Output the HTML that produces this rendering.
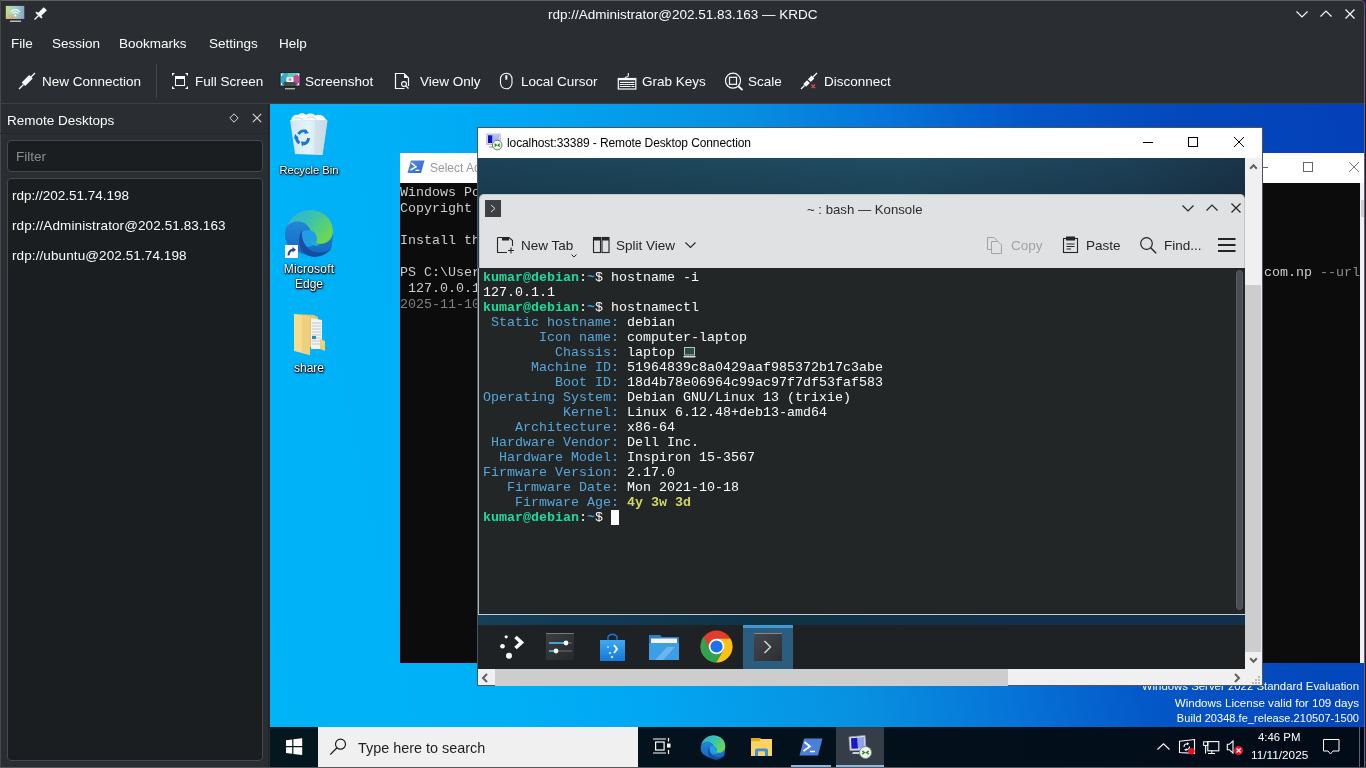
<!DOCTYPE html>
<html><head><meta charset="utf-8">
<style>
*{margin:0;padding:0;box-sizing:border-box}
html,body{will-change:transform;width:1366px;height:768px;overflow:hidden;background:#2a2e32;font-family:"Liberation Sans",sans-serif;position:relative}
.a{position:absolute}
.t{position:absolute;white-space:nowrap;line-height:1}
svg{position:absolute;overflow:visible}
.w{color:#fcfcfc;font-size:13.5px}
#desk{left:270px;top:104px;width:1094px;height:663px;overflow:hidden;
 background:linear-gradient(78deg,#00b4f8 0%,#00b0f7 20%,#02a6f2 32%,#0890e0 49%,#0674d8 61%,#0458c8 72%,#0448bc 85%,#0440b8 100%)}
#term pre{position:absolute;left:4px;top:1.5px;font-family:"Liberation Mono",monospace;font-size:13.33px;line-height:15px;color:#fcfcfc}
.g{color:#1cdc9a;font-weight:bold}
.bl{color:#55a6da}
.tl{color:#3aa0e0;font-weight:bold}
.y{color:#d2d862;font-weight:bold}
.ps{font-family:"Liberation Mono",monospace;font-size:13.33px;color:#cccccc;line-height:16px}
.di{color:#fff;font-size:11px;text-shadow:0 1px 1px rgba(0,0,0,.9),0 0 2px rgba(0,0,0,.9),1px 1px 2px #000;text-align:center}
</style></head><body>
<!-- KRDC frame -->
<div class="a" style="left:0;top:0;width:1366px;height:1px;background:#5c6064"></div>
<div class="a" style="left:0;top:0;width:1px;height:768px;background:#45494d"></div>
<div class="a" style="left:1364px;top:0;width:1px;height:768px;background:#6a5f7a"></div>
<div class="a" style="left:1365px;top:0;width:1px;height:768px;background:#2a1838"></div>
<div class="a" style="left:0;top:767px;width:1366px;height:1px;background:#55595d"></div>
<div class="a" style="left:1356px;top:0;width:10px;height:10px;background:#351a52"></div>
<div class="a" style="left:1350px;top:0;width:15px;height:14px;background:#2a2e32;border-top:1px solid #5c6064;border-right:1px solid #5d5670;border-top-right-radius:5px"></div>

<!-- title bar -->
<svg style="left:5px;top:5px" width="21" height="19" viewBox="0 0 21 19">
 <defs>
  <linearGradient id="kg" x1="0" y1="0" x2="1" y2="0"><stop offset="0" stop-color="#c4dc8a"/><stop offset=".45" stop-color="#9cd4c8"/><stop offset="1" stop-color="#8ca4c4"/></linearGradient>
  <radialGradient id="kg2" cx="0.3" cy="1" r="0.5"><stop offset="0" stop-color="#e89a70" stop-opacity=".8"/><stop offset="1" stop-color="#e89a70" stop-opacity="0"/></radialGradient>
 </defs>
 <rect x="0.8" y="0.9" width="18.5" height="13" fill="url(#kg)"/>
 <rect x="0.8" y="0.9" width="18.5" height="13" fill="url(#kg2)"/>
 <path d="M5.8 6.8 Q10.3 2.5 14.8 6.8 M7.3 8.5 Q10.3 5.8 13.3 8.5" stroke="#f4fbfb" stroke-width="1.3" fill="none"/>
 <circle cx="10.3" cy="10.4" r="1.1" fill="#f4fbfb"/>
 <rect x="5" y="15.5" width="11" height="1.5" fill="#b8bcc0"/>
</svg>
<svg style="left:32px;top:6px" width="16" height="16" viewBox="0 0 16 16">
 <g transform="rotate(45 8 8)"><rect x="5.8" y="0.5" width="4.4" height="8.5" fill="#fcfcfc"/><rect x="3.8" y="8.5" width="8.4" height="1.8" fill="#fcfcfc"/><rect x="7.4" y="10" width="1.3" height="5.8" fill="#fcfcfc"/></g>
</svg>
<div class="t w" style="left:548px;top:8px">rdp://Administrator@202.51.83.163 — KRDC</div>
<svg style="left:1296px;top:11px" width="12" height="7" viewBox="0 0 12 7"><path d="M0.5 0.5 L6 6 L11.5 0.5" stroke="#fcfcfc" stroke-width="1.2" fill="none"/></svg>
<svg style="left:1320px;top:10px" width="12" height="7" viewBox="0 0 12 7"><path d="M0.5 6.5 L6 1 L11.5 6.5" stroke="#fcfcfc" stroke-width="1.2" fill="none"/></svg>
<svg style="left:1345px;top:9px" width="10" height="10" viewBox="0 0 10 10"><path d="M0.5 0.5 L9.5 9.5 M9.5 0.5 L0.5 9.5" stroke="#fcfcfc" stroke-width="1.2"/></svg>

<!-- menu -->
<div class="t w" style="left:11px;top:37px">File</div>
<div class="t w" style="left:52px;top:37px">Session</div>
<div class="t w" style="left:119px;top:37px">Bookmarks</div>
<div class="t w" style="left:209px;top:37px">Settings</div>
<div class="t w" style="left:279px;top:37px">Help</div>

<!-- toolbar -->
<svg style="left:18px;top:72px" width="18" height="18" viewBox="0 0 18 18">
 <path d="M1 17 L5.5 12.5 M12.5 5.5 L17 1" stroke="#fcfcfc" stroke-width="1.3"/>
 <path d="M14.7 6.6 L11.2 3.1 L3.7 10.6 L7.2 14.1 Z" fill="#fcfcfc"/>
</svg>
<div class="t w" style="left:42px;top:75px">New Connection</div>
<div class="a" style="left:156px;top:64px;width:1px;height:34px;background:#43474b"></div>
<svg style="left:171px;top:72px" width="18" height="18" viewBox="0 0 18 18">
 <path d="M1 1 H4 L1 4 Z M17 1 H14 L17 4 Z M1 17 H4 L1 14 Z M17 17 H14 L17 14 Z" fill="#fcfcfc"/>
 <rect x="4.5" y="4.5" width="9" height="9" stroke="#fcfcfc" stroke-width="1" fill="none"/>
 <rect x="4" y="4" width="10" height="3" fill="#fcfcfc"/>
</svg>
<div class="t w" style="left:195px;top:75px">Full Screen</div>
<svg style="left:279px;top:72px" width="22" height="19" viewBox="0 0 22 19">
 <rect x="0.5" y="0" width="21" height="15" fill="#1c2428"/>
 <path d="M1.5 1 H20.5 V14 H1.5 Z" fill="#3aa8c8"/>
 <path d="M9 1 H20.5 V3 L13 8 L8 6 Z" fill="#56cfc0"/>
 <path d="M14 4.5 L20.5 1.5 V14 H12 Z" fill="#c84a90"/>
 <path d="M1.5 14 L6 9.5 H15 L20.5 14 Z" fill="#3c5248"/>
 <rect x="7.5" y="5.3" width="7" height="4.7" fill="#fff"/>
 <rect x="9.5" y="6.3" width="3" height="2.5" fill="#d05090" opacity=".7"/>
 <path d="M2.5 4 V2 H4.5 M17.5 2 H19.5 V4 M2.5 11 V13 H4.5 M17.5 13 H19.5 V11" stroke="#fff" stroke-width=".9" fill="none"/>
 <rect x="6" y="16" width="10" height="1.4" fill="#b0b0b0"/>
</svg>
<div class="t w" style="left:305px;top:75px">Screenshot</div>
<svg style="left:394px;top:72px" width="18" height="18" viewBox="0 0 18 18">
 <path d="M1.5 1.5 H10 L14.5 6 V14" stroke="#fcfcfc" stroke-width="1.2" fill="none"/>
 <path d="M1.5 1 V16.5 H10.5" stroke="#fcfcfc" stroke-width="1.2" fill="none"/>
 <path d="M10 1.5 V6 H14.5 Z" fill="#fcfcfc"/>
 <circle cx="10" cy="12" r="2.4" stroke="#fcfcfc" stroke-width="1.1" fill="none"/>
 <path d="M11.8 13.8 L14.5 16.5" stroke="#fcfcfc" stroke-width="1.2"/>
</svg>
<div class="t w" style="left:420px;top:75px">View Only</div>
<svg style="left:499px;top:72px" width="14" height="18" viewBox="0 0 14 18">
 <rect x="1.5" y="1.3" width="11.5" height="15.5" rx="5.7" stroke="#fcfcfc" stroke-width="1.1" fill="none"/>
 <rect x="6.3" y="3.2" width="2" height="4.5" fill="#fcfcfc"/>
</svg>
<div class="t w" style="left:521px;top:75px">Local Cursor</div>
<svg style="left:617px;top:72px" width="20" height="18" viewBox="0 0 20 18">
 <path d="M11.3 1 V3.5 Q11.3 5 9.5 5 Q8 5 8 6.5" stroke="#fcfcfc" stroke-width="1.1" fill="none"/>
 <rect x="1.3" y="6.5" width="17.5" height="10.5" stroke="#fcfcfc" stroke-width="1.2" fill="none"/>
 <rect x="1.3" y="7" width="17.5" height="1.2" fill="#fcfcfc"/>
 <path d="M3.5 10.4 H4.6 M5.5 10.4 H6.6 M7.5 10.4 H8.6 M9.5 10.4 H10.6 M11.5 10.4 H12.6 M13.5 10.4 H14.6 M15.2 10.4 H17 M3.2 12.5 H5 M6 12.5 H7 M8 12.5 H9 M10 12.5 H11 M12 12.5 H13 M14 12.5 H17 M3.2 14.5 H5 M6 14.5 H13.2 M14.8 14.5 H17" stroke="#fcfcfc" stroke-width="1.1" stroke-linecap="round"/>
</svg>
<div class="t w" style="left:642px;top:75px">Grab Keys</div>
<svg style="left:724px;top:72px" width="20" height="19" viewBox="0 0 20 19">
 <circle cx="9" cy="8.7" r="7.5" stroke="#fcfcfc" stroke-width="1.2" fill="none"/>
 <rect x="5.5" y="5.3" width="7" height="7" stroke="#fcfcfc" stroke-width="1.2" fill="none"/>
 <path d="M14.2 14 L18.5 18.2" stroke="#fcfcfc" stroke-width="1.8"/>
</svg>
<div class="t w" style="left:748px;top:75px">Scale</div>
<svg style="left:800px;top:72px" width="20" height="18" viewBox="0 0 20 18">
 <path d="M1 17 L4.5 13.5 M13 5 L17 1" stroke="#fcfcfc" stroke-width="1.3"/>
 <path d="M3.3 11.9 L7 8.2 L9.8 11 L6.1 14.7 Z M7.9 7.3 L11.6 3.6 L14.4 6.4 L10.7 10.1 Z" fill="#fcfcfc"/>
 <path d="M11.5 12.5 L15 16 M15 12.5 L11.5 16" stroke="#da4453" stroke-width="1.5"/>
</svg>
<div class="t w" style="left:824px;top:75px">Disconnect</div>
<div class="a" style="left:0;top:103px;width:1364px;height:1px;background:#3d4145"></div>

<!-- left dock -->
<div class="t w" style="left:7px;top:114px">Remote Desktops</div>
<svg style="left:229px;top:113px" width="10" height="10" viewBox="0 0 10 10"><path d="M5 0.8 L9.2 5 L5 9.2 L0.8 5 Z" stroke="#dcdcdc" stroke-width="1" fill="none"/></svg>
<svg style="left:252px;top:113px" width="10" height="10" viewBox="0 0 10 10"><path d="M0.8 0.8 L9.2 9.2 M9.2 0.8 L0.8 9.2" stroke="#dcdcdc" stroke-width="1.1"/></svg>
<div class="a" style="left:0;top:133px;width:269px;height:1px;background:#24272a"></div>
<div class="a" style="left:7px;top:140px;width:256px;height:32px;background:#1b1e20;border:1px solid #45494d;border-radius:4px"></div>
<div class="t" style="left:16px;top:149.5px;color:#8a8e92;font-size:13.5px">Filter</div>
<div class="a" style="left:7px;top:178px;width:256px;height:583px;background:#1b1e20;border:1px solid #45494d;border-radius:4px"></div>
<div class="t w" style="left:12px;top:189px">rdp://202.51.74.198</div>
<div class="t w" style="left:12px;top:219px;letter-spacing:0.1px">rdp://Administrator@202.51.83.163</div>
<div class="t w" style="left:12px;top:249px;letter-spacing:0.1px">rdp://ubuntu@202.51.74.198</div>
<div class="a" style="left:268px;top:104px;width:1px;height:663px;background:#222528"></div>

<!-- desktop -->
<div id="desk" class="a"></div>
<!-- DESKTOP_ICONS -->
<svg style="left:289px;top:112px" width="40" height="44" viewBox="0 0 40 44">
 <defs>
  <linearGradient id="rb" x1="0" y1="0" x2="1" y2="0"><stop offset="0" stop-color="#dfe8ee"/><stop offset=".5" stop-color="#f6f9fb"/><stop offset=".7" stop-color="#e8eef2"/><stop offset="1" stop-color="#cdd8e0"/></linearGradient>
 </defs>
 <path d="M1 8 L38.5 8.5 L33.5 43 L6 42 Z" fill="url(#rb)" opacity=".93"/>
 <path d="M26 9 L38.5 8.5 L33.5 43 L25 42.5 Z" fill="#d0dae2" opacity=".6"/>
 <path d="M2 8.5 C3 4 6 2 9 3 C11 0.5 15 0.5 17 3 C20 1 24 1 26 3.5 C29 2 33 2.5 35 5 L38 8.5 Z" fill="#f8fafb"/>
 <path d="M6 7 C9 5 12 6 14 8 M18 6 C21 4 25 5 27 7.5" stroke="#c8d2da" stroke-width="1" fill="none"/>
 <g stroke="#1b78d2" stroke-width="3" fill="none">
  <path d="M9.5 22 A6.5 6.5 0 0 1 17.5 19.5"/>
  <path d="M19.5 26 A6.5 6.5 0 0 1 14.5 32"/>
  <path d="M10.5 31 A6.5 6.5 0 0 1 7.5 25"/>
 </g>
 <path d="M16 17 L20 21 L15.5 22 Z M17.5 30 L13 34.5 L12 29.5 Z M6 22 L9.5 25.5 L5 27 Z" fill="#1b78d2"/>
</svg>
<div class="t di" style="left:270px;top:165px;width:78px;font-size:11.2px">Recycle Bin</div>
<svg style="left:284px;top:209px" width="50" height="49" viewBox="0 0 50 49">
 <defs>
  <linearGradient id="eg1" x1="0" y1="0" x2="1" y2="0.6"><stop offset="0" stop-color="#2fb0e4"/><stop offset=".45" stop-color="#36c0b8"/><stop offset="1" stop-color="#6bd850"/></linearGradient>
  <linearGradient id="eg2" x1="0" y1="0" x2="0" y2="1"><stop offset="0" stop-color="#2592dc"/><stop offset="1" stop-color="#1466c0"/></linearGradient>
  <linearGradient id="eg3" x1="0" y1="0" x2="1" y2="1"><stop offset="0" stop-color="#1a4fa8"/><stop offset="1" stop-color="#154a9a"/></linearGradient>
 </defs>
 <path d="M1,27 C1,12 12,1 26,1 C40,1 49,11 49,22 C49,30 48,36 47,40 C40,48 30,49.5 23,46 C10,42 1,37 1,27 Z" fill="url(#eg2)"/>
 <path d="M2,19 C6,7 16,1 26,1 C40,1 49,11 49,22 C49,30 43,35 36,35 C30,35 27.5,31 27.5,27 C27.5,18 21,12.5 14,12.5 C8,12.5 4,15 2,19 Z" fill="url(#eg1)"/>
 <ellipse cx="24" cy="29.5" rx="9" ry="8.5" fill="#1f9de6"/>
 <path d="M27.5,27 C27,31 30,35 36,35 L33,37 C28,37 26,33 27.5,27 Z" fill="#2aa8d8"/>
 <path d="M18,21 C13,29 14,41 23,46 C30,49.5 40,48 47,40 C41,44 33,45 27,41.5 C20,37 17,29 18,21 Z" fill="url(#eg3)"/>

 <rect x="1" y="36" width="13" height="13" fill="#fff"/>
 <path d="M4.5 46.5 Q4.5 41.5 9.5 40.5" stroke="#2a4a90" stroke-width="2" fill="none"/>
 <path d="M8.5 38 L12 40.7 L8.5 43.5 Z" fill="#2a4a90"/>
</svg>
<div class="t di" style="left:270px;top:263px;width:78px;font-size:12px;letter-spacing:0.2px">Microsoft</div>
<div class="t di" style="left:270px;top:278px;width:78px;font-size:12px">Edge</div>
<svg style="left:292px;top:313px" width="34" height="42" viewBox="0 0 34 42">
 <path d="M2 1 L22 2 L26 4 L26 34 L2 34 Z" fill="#e9c46a"/>
 <path d="M19 5 L30 7 L30 36 L19 36 Z" fill="#f4f4f0"/>
 <path d="M20 10 H29 M20 13 H29 M20 16 H29 M20 19 H29 M20 22 H29 M20 25 H29 M20 28 H29 M20 31 H29" stroke="#9ab" stroke-width=".6"/>
 <rect x="20" y="23" width="4" height="3" fill="#3a80c8"/>
 <path d="M28 26 L33 28 L33 38 L28 36 Z" fill="#f0cf78"/>
 <path d="M2 1 L18 4 L18 42 L2 38 Z" fill="#f6dc8c"/>
 <path d="M10 3 L18 5 L18 42 L10 40 Z" fill="#ecd07e"/>
</svg>
<div class="t di" style="left:270px;top:362px;width:78px;font-size:12px">share</div>

<!-- watermark -->
<div class="t" style="left:1000px;top:680.5px;color:#fff;font-size:11.4px;text-align:right;width:359px">Windows Server 2022 Standard Evaluation</div>
<div class="t" style="left:1000px;top:697px;width:359px;color:#fff;font-size:11.6px;text-align:right">Windows License valid for 109 days</div>
<div class="t" style="left:1000px;top:713px;width:359px;color:#fff;font-size:11px;text-align:right;letter-spacing:0.05px">Build 20348.fe_release.210507-1500</div>
<!-- POWERSHELL -->
<div class="a" style="left:400px;top:153px;width:964px;height:30px;background:#fff"></div>
<svg style="left:407px;top:160px" width="18" height="14" viewBox="0 0 18 14">
 <defs><linearGradient id="pg" x1="0" y1="0" x2="1" y2="1"><stop offset="0" stop-color="#5a90e0"/><stop offset="1" stop-color="#2c64c8"/></linearGradient></defs>
 <path d="M4 0.5 H17.5 L14 13 H0.5 Z" fill="url(#pg)"/>
 <path d="M4.5 3 L9 6.8 L3.5 10" stroke="#fff" stroke-width="1.5" fill="none"/>
 <path d="M8.5 10.3 H12.5" stroke="#fff" stroke-width="1.3"/>
</svg>
<div class="t" style="left:430px;top:162px;color:#9a9a9a;font-size:12px">Select Administrator: Windows PowerShell</div>
<div class="a" style="left:400px;top:183px;width:964px;height:480px;background:#0c0c0c"></div>
<div class="t ps" style="left:400px;top:184.5px"><pre class="ps">Windows PowerShell
Copyright (C) Microsoft Corporation. All rights reserved.

Install the latest PowerShell for new features and improvements!

PS C:\Users\Administrator&gt; ssh
 127.0.0.1
<span style="color:#808080">2025-11-10</span></pre></div>
<div class="t ps" style="left:1264px;top:264.6px"><pre class="ps">com.np <span style="color:#8c8c8c">--url</span></pre></div>
<div class="a" style="left:1360px;top:183px;width:4px;height:480px;background:#f0f0f0"></div>
<div class="a" style="left:1361px;top:200px;width:3px;height:17px;background:#cdcdcd"></div>
<svg style="left:1303px;top:162px" width="10" height="10" viewBox="0 0 10 10"><rect x="0.5" y="0.5" width="9" height="9" stroke="#666" stroke-width="1" fill="none"/></svg>
<svg style="left:1349px;top:162px" width="10" height="10" viewBox="0 0 10 10"><path d="M0 0 L10 10 M10 0 L0 10" stroke="#777" stroke-width="1"/></svg>
<div class="a" style="left:1262px;top:167px;width:6px;height:1px;background:#666"></div>

<!-- RDC -->
<div class="a" style="left:477px;top:127px;width:786px;height:559px;background:#f0f0f0;border:1px solid #4a5560"></div>
<div class="a" style="left:478px;top:128px;width:784px;height:30px;background:#fff"></div>
<svg style="left:486px;top:133px" width="18" height="18" viewBox="0 0 18 18">
 <rect x="0.8" y="1" width="13.5" height="10.5" fill="#d8dce4" stroke="#b0b4bc" stroke-width=".8"/>
 <path d="M2 2.3 H6.5 V10 H2 Z" fill="#1010d0"/>
 <path d="M6.5 2.3 H13 V10 H6.5 Z" fill="#a8b8f0"/>
 <rect x="3" y="13" width="5" height="2" fill="#c8ccd0"/>
 <circle cx="11.2" cy="12" r="4.8" fill="#f0f6ee" stroke="#707870" stroke-width="1"/>
 <path d="M8.6 10.8 L10.3 12.2 L8.6 13.6 M13.8 10.8 L12.1 12.2 L13.8 13.6" stroke="#2a8a2a" stroke-width="1.3" fill="none"/>
</svg>
<div class="t" style="left:507px;top:137px;color:#000;font-size:12px;letter-spacing:-0.1px">localhost:33389 - Remote Desktop Connection</div>
<div class="a" style="left:1143px;top:142px;width:10px;height:1px;background:#000"></div>
<svg style="left:1188px;top:137px" width="10" height="10" viewBox="0 0 10 10"><rect x="0.5" y="0.5" width="9" height="9" stroke="#000" stroke-width="1" fill="none"/></svg>
<svg style="left:1234px;top:137px" width="10" height="10" viewBox="0 0 10 10"><path d="M0 0 L10 10 M10 0 L0 10" stroke="#000" stroke-width="1"/></svg>
<div class="a" style="left:478px;top:158px;width:767px;height:510px;background:linear-gradient(90deg,#1c4258 0%,#204c62 55%,#1d4058 85%,#1a3448 100%)"></div>
<div class="a" style="left:478px;top:158px;width:767px;height:37px;background:linear-gradient(180deg,rgba(0,0,0,0),rgba(0,0,0,.12))"></div>
<!-- scrollbars -->
<svg style="left:1249px;top:163px" width="9" height="7" viewBox="0 0 9 7"><path d="M1.2 5.8 L4.5 2.3 L7.8 5.8" stroke="#606060" stroke-width="2" fill="none"/></svg>
<div class="a" style="left:1245px;top:285px;width:16px;height:367px;background:#cdcdcd"></div>
<svg style="left:1249px;top:657px" width="9" height="7" viewBox="0 0 9 7"><path d="M1.2 1.2 L4.5 4.7 L7.8 1.2" stroke="#606060" stroke-width="2" fill="none"/></svg>
<div class="a" style="left:495px;top:669px;width:513px;height:17px;background:#cdcdcd"></div>
<svg style="left:481px;top:673px" width="8" height="10" viewBox="0 0 8 10"><path d="M6 1 L2 5 L6 9" stroke="#606060" stroke-width="2" fill="none"/></svg>
<svg style="left:1233px;top:673px" width="8" height="10" viewBox="0 0 8 10"><path d="M2 1 L6 5 L2 9" stroke="#606060" stroke-width="2" fill="none"/></svg>

<svg style="left:1251px;top:675px" width="10" height="10" viewBox="0 0 10 10"><g fill="#b8b8b8"><rect x="7" y="1" width="2" height="2"/><rect x="4" y="4" width="2" height="2"/><rect x="7" y="4" width="2" height="2"/><rect x="1" y="7" width="2" height="2"/><rect x="4" y="7" width="2" height="2"/><rect x="7" y="7" width="2" height="2"/></g></svg>
<!-- KONSOLE -->
<div class="a" style="left:479px;top:194px;width:766px;height:421px;background:#dfe1e3;border-radius:5px 5px 0 0;border:1px solid #c2c6ca;border-bottom:none"></div>
<svg style="left:485px;top:200px" width="16" height="17" viewBox="0 0 16 17">
 <rect x="0" y="0" width="16" height="17" fill="#3d4044"/>
 <path d="M6 5 L10 8.5 L6 12" stroke="#dcdcdc" stroke-width="1" fill="none"/>
</svg>
<div class="t" style="left:807px;top:202.5px;color:#2a2d30;font-size:13.2px">~ : bash — Konsole</div>
<svg style="left:1182px;top:205px" width="12" height="7" viewBox="0 0 12 7"><path d="M0.5 0.5 L6 6 L11.5 0.5" stroke="#232627" stroke-width="1.2" fill="none"/></svg>
<svg style="left:1206px;top:204px" width="12" height="7" viewBox="0 0 12 7"><path d="M0.5 6.5 L6 1 L11.5 6.5" stroke="#232627" stroke-width="1.2" fill="none"/></svg>
<svg style="left:1231px;top:203px" width="10" height="10" viewBox="0 0 10 10"><path d="M0.5 0.5 L9.5 9.5 M9.5 0.5 L0.5 9.5" stroke="#232627" stroke-width="1.2"/></svg>
<!-- konsole toolbar -->
<svg style="left:497px;top:237px" width="18" height="17" viewBox="0 0 18 17">
 <path d="M0.5 0.5 H12 L15.5 3.5 V9 M0.5 0.5 V15.5 H10" stroke="#232627" stroke-width="1.1" fill="none"/>
 <rect x="5" y="0.5" width="7" height="3" fill="#232627"/>
 <path d="M11 13.5 H17 M14 10.5 V16.5" stroke="#232627" stroke-width="1.1"/>
</svg>
<div class="t" style="left:521px;top:239px;color:#232627;font-size:13.5px">New Tab</div>
<svg style="left:571px;top:254px" width="6" height="4" viewBox="0 0 6 4"><path d="M0.5 0.5 L3 3 L5.5 0.5" stroke="#232627" stroke-width="1" fill="none"/></svg>
<svg style="left:593px;top:237px" width="17" height="17" viewBox="0 0 17 17">
 <rect x="0.5" y="0.5" width="7" height="15" stroke="#232627" stroke-width="1.1" fill="none"/>
 <rect x="9" y="0.5" width="7" height="15" stroke="#232627" stroke-width="1.1" fill="none"/>
 <rect x="0.5" y="0.5" width="7" height="3" fill="#232627"/>
 <rect x="9" y="0.5" width="7" height="3" fill="#232627"/>
</svg>
<div class="t" style="left:616px;top:239px;color:#232627;font-size:13.5px">Split View</div>
<svg style="left:685px;top:242px" width="11" height="7" viewBox="0 0 11 7"><path d="M0.5 0.5 L5.5 5.5 L10.5 0.5" stroke="#232627" stroke-width="1.1" fill="none"/></svg>
<svg style="left:987px;top:237px" width="16" height="17" viewBox="0 0 16 17">
 <path d="M0.5 0.5 H7 L10 3.5 V12.5 H0.5 Z" stroke="#a0a4a8" stroke-width="1" fill="none"/>
 <path d="M4.5 4.5 H11 L14.5 8 V16.5 H4.5 Z" stroke="#a0a4a8" stroke-width="1" fill="#dfe1e3"/>
</svg>
<div class="t" style="left:1011px;top:239px;color:#a0a4a8;font-size:13.5px">Copy</div>
<svg style="left:1063px;top:236px" width="16" height="17" viewBox="0 0 16 17">
 <rect x="0.5" y="2.5" width="14" height="14" stroke="#232627" stroke-width="1.1" fill="none"/>
 <rect x="3" y="0.5" width="9" height="4" fill="#232627"/>
 <path d="M3.5 8 H11.5 M3.5 10.5 H11.5 M3.5 13 H8" stroke="#232627" stroke-width="1"/>
</svg>
<div class="t" style="left:1086px;top:239px;color:#232627;font-size:13.5px">Paste</div>
<svg style="left:1140px;top:237px" width="17" height="17" viewBox="0 0 17 17">
 <circle cx="6.5" cy="6.5" r="5.8" stroke="#232627" stroke-width="1.2" fill="none"/>
 <path d="M10.7 10.7 L16.2 16.2" stroke="#232627" stroke-width="1.4"/>
</svg>
<div class="t" style="left:1164px;top:239px;color:#232627;font-size:13.5px">Find...</div>
<svg style="left:1218px;top:238px" width="18" height="14" viewBox="0 0 18 14">
 <path d="M0 1 H17.5 M0 7 H17.5 M0 13 H17.5" stroke="#232627" stroke-width="2"/>
</svg>
<!-- terminal -->
<div class="a" style="left:478px;top:268px;width:1px;height:346px;background:#b0b6ba"></div><div class="a" style="left:478px;top:614px;width:767px;height:1px;background:#c4ccd2"></div><div id="term" class="a" style="left:479px;top:268px;width:766px;height:346px;background:#232627">
<pre><span class="g">kumar@debian</span>:<span class="tl">~</span>$ hostname -i
127.0.1.1
<span class="g">kumar@debian</span>:<span class="tl">~</span>$ hostnamectl
<span class="bl"> Static hostname:</span> debian
<span class="bl">       Icon name:</span> computer-laptop
<span class="bl">         Chassis:</span> laptop
<span class="bl">      Machine ID:</span> 51964839c8a0429aaf985372b17c3abe
<span class="bl">         Boot ID:</span> 18d4b78e06964c99ac97f7df53faf583
<span class="bl">Operating System:</span> Debian GNU/Linux 13 (trixie)
<span class="bl">          Kernel:</span> Linux 6.12.48+deb13-amd64
<span class="bl">    Architecture:</span> x86-64
<span class="bl"> Hardware Vendor:</span> Dell Inc.
<span class="bl">  Hardware Model:</span> Inspiron 15-3567
<span class="bl">Firmware Version:</span> 2.17.0
<span class="bl">   Firmware Date:</span> Mon 2021-10-18
<span class="bl">    Firmware Age:</span> <span class="y">4y 3w 3d</span>
<span class="g">kumar@debian</span>:<span class="tl">~</span>$ <span style="background:#fcfcfc">&nbsp;</span></pre>
<div class="a" style="left:757px;top:2px;width:7px;height:340px;border-radius:3.5px;background:#4a4e52;border:1px solid #5a5e62"></div>
<svg style="left:204px;top:79px" width="13" height="11" viewBox="0 0 13 11"><rect x="1.5" y="0.5" width="10" height="7.5" fill="#2a4a48" stroke="#b8c4c4" stroke-width="1"/><path d="M0 9 H13 L12 10.5 H1 Z" fill="#d0dcdc"/></svg>
</div>
<!-- KDE dock -->
<div class="a" style="left:478px;top:615px;width:767px;height:10px;background:linear-gradient(90deg,#15405a,#0f3244 40%,#11304a 70%,#12304a)"></div>
<div class="a" style="left:478px;top:625px;width:767px;height:44px;background:#1f2225"></div>
<svg style="left:498px;top:632px" width="28" height="28" viewBox="0 0 28 28">
 <circle cx="8.2" cy="4.8" r="1.6" fill="#fcfcfc"/>
 <circle cx="4.5" cy="14.2" r="2.3" fill="#fcfcfc"/>
 <circle cx="11" cy="23.7" r="3" fill="#fcfcfc"/>
 <path d="M17.5 5 L23.5 10.5 L17.5 16" stroke="#fcfcfc" stroke-width="3.6" fill="none" stroke-linejoin="miter"/>
</svg>
<svg style="left:546px;top:633px" width="28" height="27" viewBox="0 0 28 27">
 <defs><linearGradient id="stg" x1="0" y1="0" x2="1" y2="1"><stop offset="0" stop-color="#3c3f42"/><stop offset="1" stop-color="#26292b"/></linearGradient></defs>
 <rect x="0" y="0" width="28" height="27" fill="url(#stg)"/>
 <rect x="0" y="0" width="28" height="1" fill="#74787c"/>
 <path d="M3 10 H26" stroke="#55585c" stroke-width="1.6"/>
 <path d="M3 10 H20" stroke="#3daee9" stroke-width="1.8"/>
 <circle cx="20" cy="10" r="2.4" fill="#fcfcfc"/>
 <path d="M3 18 H26" stroke="#55585c" stroke-width="1.6"/>
 <path d="M3 18 H10" stroke="#3daee9" stroke-width="1.8"/>
 <circle cx="10" cy="18" r="2.4" fill="#fcfcfc"/>
</svg>
<svg style="left:600px;top:633px" width="25" height="28" viewBox="0 0 25 28">
 <defs><linearGradient id="dg" x1="0" y1="0" x2="0" y2="1"><stop offset="0" stop-color="#3fa8f0"/><stop offset="1" stop-color="#1478d8"/></linearGradient></defs>
 <path d="M8 7 V3.5 Q12.5 -1 17 3.5 V7" stroke="#1a7ad6" stroke-width="1.3" fill="none"/>
 <rect x="0" y="7" width="25" height="21" fill="url(#dg)"/>
 <circle cx="8" cy="14" r="1" fill="#b8e0ff"/><circle cx="10" cy="20" r="1.2" fill="#b8e0ff"/><circle cx="12" cy="24" r="1.3" fill="#b8e0ff"/>
 <path d="M14 12 L17 16 L14 20" stroke="#e8f6ff" stroke-width="2" fill="none"/>
</svg>
<svg style="left:649px;top:633px" width="30" height="27" viewBox="0 0 30 27">
 <path d="M0 2 H11 L13 4 H30 V27 H0 Z" fill="#2f7fc8"/>
 <rect x="2" y="5.5" width="26" height="5" fill="#f0f6fc"/>
 <path d="M0 10 H30 V27 H0 Z" fill="#3d9ee6"/>
 <path d="M6 27 L18 14 L26 14 L14 27 Z" fill="#7fc0ee" opacity=".7"/>
</svg>
<svg style="left:699.5px;top:630.2px" width="33" height="33" viewBox="0 0 33 33">
 <defs><clipPath id="cc"><circle cx="16.5" cy="16.5" r="16"/></clipPath></defs>
 <g clip-path="url(#cc)">
 <rect x="0" y="0" width="33" height="33" fill="#e33b2e"/>
 <path d="M16.5 8.7 L56.5 8.7 L56.5 56.5 L3.25 55 L23.25 20.4 L16.5 16.5 Z" fill="#fbc116"/>
 <path d="M23.25 20.4 L3.25 55 L-30 55 L-30 -26 L-10.25 -25.96 L9.75 20.4 L16.5 16.5 Z" fill="#2ea44f"/>
 </g>
 <circle cx="16.5" cy="16.5" r="7.8" fill="#fff"/>
 <circle cx="16.5" cy="16.5" r="6.1" fill="#1a73e8"/>
</svg>
<div class="a" style="left:743px;top:625px;width:50px;height:44px;background:#2b5e7e"></div>
<div class="a" style="left:743px;top:625px;width:50px;height:3px;background:#3d9bd2"></div>
<svg style="left:754px;top:633px" width="28" height="28" viewBox="0 0 28 28">
 <defs><linearGradient id="kk" x1="0" y1="0" x2="1" y2="1"><stop offset="0" stop-color="#45484b"/><stop offset="1" stop-color="#2c2e30"/></linearGradient></defs>
 <rect x="0" y="0" width="28" height="28" fill="url(#kk)"/>
 <rect x="0" y="0" width="28" height="1" fill="#85888b"/>
 <path d="M10.5 8 L16.5 14 L10.5 20" stroke="#dcdcdc" stroke-width="1.4" fill="none"/>
</svg>

<!-- TASKBAR -->
<div class="a" style="left:270px;top:727px;width:1094px;height:40px;background:linear-gradient(90deg,#03171f 0%,#03121c 40%,#020c18 100%)"></div>
<div class="a" style="left:318px;top:727px;width:320px;height:40px;background:#f0f0f0"></div>
<div class="t" style="left:358px;top:741px;color:#1e1e1e;font-size:14.4px">Type here to search</div>
<!-- start -->
<svg style="left:285px;top:738px" width="18" height="18" viewBox="0 0 18 18">
 <path d="M1 2.3 L7.2 1.5 V8 H1 Z M8.4 1.3 L17.2 0.2 V8 H8.4 Z M1 9.2 H7.2 V15.7 L1 14.9 Z M8.4 9.2 H17.2 V17 L8.4 15.9 Z" fill="#fff"/>
</svg>
<svg style="left:329px;top:738px" width="18" height="18" viewBox="0 0 18 18">
 <circle cx="11.5" cy="6.2" r="5" stroke="#1e1e1e" stroke-width="1.2" fill="none"/>
 <path d="M8 9.8 L1.2 16.6" stroke="#1e1e1e" stroke-width="1.3"/>
</svg>
<!-- task view -->
<svg style="left:653px;top:738px" width="18" height="16" viewBox="0 0 18 16">
 <path d="M0.5 1 H12 M0.5 15 H12 M1 1 V15" stroke="none"/>
 <path d="M0 1 H13 M0 15 H13" stroke="#fff" stroke-width="1.2"/>
 <rect x="2.6" y="4" width="8.5" height="8" stroke="#fff" stroke-width="1.2" fill="none"/>
 <path d="M15.5 0 V3.5 M15.5 12 V16" stroke="#fff" stroke-width="1.2"/>
 <rect x="14" y="5.5" width="3.5" height="4" fill="#fff"/>
</svg>
<svg style="left:700px;top:735px" width="26" height="25" viewBox="0 0 50 49">
 <path d="M1,27 C1,12 12,1 26,1 C40,1 49,11 49,22 C49,30 48,36 47,40 C40,48 30,49.5 23,46 C10,42 1,37 1,27 Z" fill="url(#eg2)"/>
 <path d="M2,19 C6,7 16,1 26,1 C40,1 49,11 49,22 C49,30 43,35 36,35 C30,35 27.5,31 27.5,27 C27.5,18 21,12.5 14,12.5 C8,12.5 4,15 2,19 Z" fill="url(#eg1)"/>
 <ellipse cx="24" cy="29.5" rx="9" ry="8.5" fill="#1f9de6"/>
 <path d="M27.5,27 C27,31 30,35 36,35 L33,37 C28,37 26,33 27.5,27 Z" fill="#2aa8d8"/>
 <path d="M18,21 C13,29 14,41 23,46 C30,49.5 40,48 47,40 C41,44 33,45 27,41.5 C20,37 17,29 18,21 Z" fill="url(#eg3)"/>
</svg>
<svg style="left:751px;top:737.5px" width="21" height="18" viewBox="0 0 21 18">
 <path d="M0 0 H9 L10 1 H21 V18 H0 Z" fill="#fcd462"/>
 <path d="M0 0 H9 L9 3.2 H0 Z" fill="#e8a81a"/>
 <path d="M4 18 V12.5 Q4 10.5 6 10.5 H15 Q17 10.5 17 12.5 V18 H14 V14 Q14 13.2 13 13.2 H8 Q7 13.2 7 14 V18 Z" fill="#3d8fe0"/>
</svg>
<svg style="left:799px;top:738px" width="24" height="18" viewBox="0 0 24 18">
 <path d="M5 0.5 H23.5 L19 17.5 H0.5 Z" fill="#4a80d8"/>
 <path d="M5.5 4 L11 8.5 L4.5 13" stroke="#fff" stroke-width="1.8" fill="none"/>
 <path d="M11 13.5 H16" stroke="#fff" stroke-width="1.5"/>
</svg>
<div class="a" style="left:791px;top:765px;width:40px;height:2px;background:#8ab8e0"></div>
<div class="a" style="left:836px;top:727px;width:48px;height:40px;background:#353d48"></div>
<div class="a" style="left:836px;top:765px;width:48px;height:2px;background:#8ab8e0"></div>
<svg style="left:848px;top:735px" width="25" height="24" viewBox="0 0 25 24">
 <path d="M1 2 L17 0.5 L18 15 L2 15.5 Z" fill="#dce2ea" stroke="#9aa4b0" stroke-width=".8"/>
 <path d="M3 3.2 L9.5 2.7 L10 13.5 L3.5 13.7 Z" fill="#1818c8"/>
 <path d="M9.5 2.7 L16 2.1 L16.5 13.3 L10 13.5 Z" fill="#8ea4e8"/>
 <path d="M5 17 H13 L14 19 H4 Z" fill="#c8ced4"/>
 <circle cx="17.5" cy="17.5" r="6" fill="#eef4ec" stroke="#7a8a80" stroke-width="1"/>
 <path d="M14.3 16 L16.4 17.6 L14.3 19.2 M20.7 16 L18.6 17.6 L20.7 19.2" stroke="#2a8a2a" stroke-width="1.5" fill="none"/>
</svg>
<!-- tray -->
<svg style="left:1157px;top:743px" width="13" height="7" viewBox="0 0 13 7"><path d="M0.5 6.5 L6.5 0.8 L12.5 6.5" stroke="#fff" stroke-width="1.1" fill="none"/></svg>
<svg style="left:1178px;top:739px" width="18" height="16" viewBox="0 0 18 16">
 <path d="M1.5 2.2 L16.5 0.5 V14.3 L1.5 13.6 Z" stroke="#fff" stroke-width="1.1" fill="none"/>
 <path d="M6 8 Q6 5 9.5 4.8 M11.5 7.5 Q11.5 10.5 8 10.8" stroke="#fff" stroke-width="1.1" fill="none"/>
 <path d="M9 3.2 L11.3 4.8 L9 6.2 Z M8.5 9.3 L6.2 10.8 L8.5 12.3 Z" fill="#fff"/>
 <circle cx="13.4" cy="12.2" r="3.3" fill="#e81123"/>
</svg>
<svg style="left:1202px;top:739px" width="18" height="16" viewBox="0 0 18 16">
 <rect x="5.8" y="2.6" width="11" height="9.2" stroke="#fff" stroke-width="1.1" fill="none"/>
 <rect x="1.6" y="2.8" width="4.2" height="3.6" stroke="#fff" stroke-width="1" fill="none"/>
 <path d="M3.6 6.4 V14.6 M9.8 11.8 V14.5 M6 14.5 H13" stroke="#fff" stroke-width="1.1" fill="none"/>
</svg>
<svg style="left:1226px;top:739px" width="18" height="16" viewBox="0 0 18 16">
 <path d="M1.3 5.3 H3.3 L7 2 V14 L3.3 10.7 H1.3 Z" stroke="#fff" stroke-width="1.1" fill="none"/>
 <circle cx="12.6" cy="11.5" r="4.5" fill="#e81123"/>
 <path d="M10.6 9.5 L14.6 13.5 M14.6 9.5 L10.6 13.5" stroke="#fff" stroke-width="1.2"/>
</svg>
<div class="t" style="left:1258px;top:732px;color:#fff;font-size:11.4px">4:46 PM</div>
<div class="t" style="left:1251px;top:750px;color:#fff;font-size:11.8px">11/11/2025</div>
<svg style="left:1323px;top:739px" width="17" height="16" viewBox="0 0 17 16">
 <path d="M0.5 0.5 H16 V12 H10 L7.5 15 L5 12 H0.5 Z" stroke="#fff" stroke-width="1" fill="none"/>
</svg>
<div class="a" style="left:1359px;top:727px;width:1px;height:40px;background:#5a6470"></div>

</body></html>
